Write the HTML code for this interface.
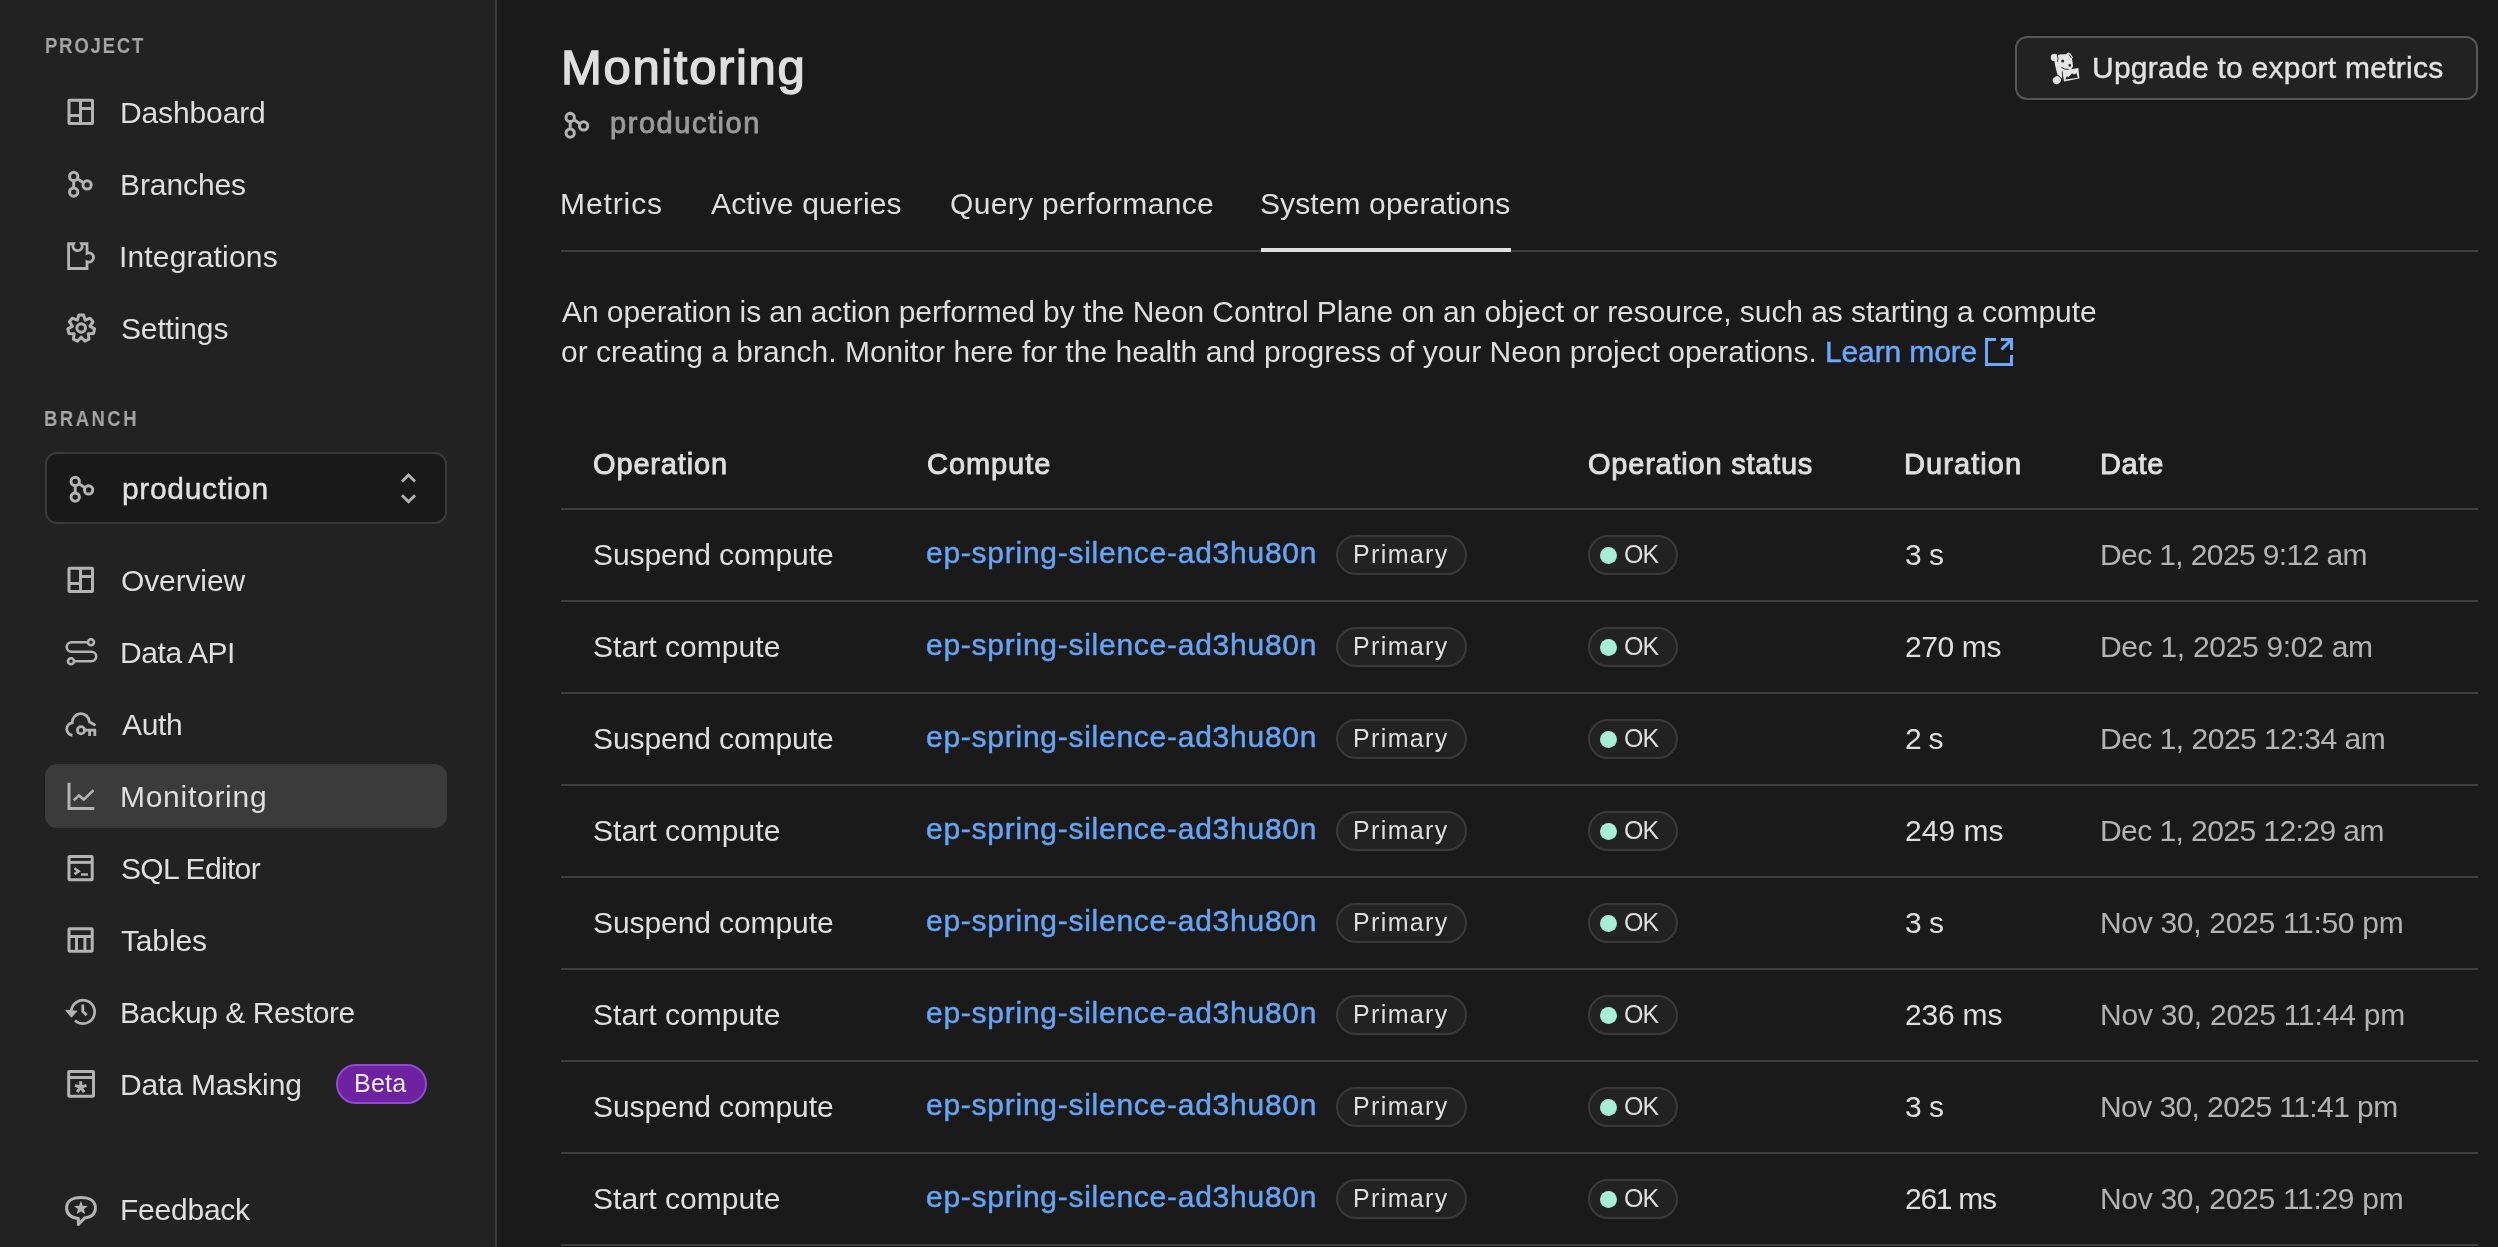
<!DOCTYPE html>
<html><head><meta charset="utf-8">
<style>
*{margin:0;padding:0;box-sizing:border-box}
html,body{width:2498px;height:1247px;overflow:hidden;-webkit-font-smoothing:antialiased;background:#1a1a1a;font-family:"Liberation Sans",sans-serif}
.a{position:absolute;white-space:nowrap;line-height:1;will-change:transform}

#side{position:absolute;left:0;top:0;width:497px;height:1247px;background:#222222;border-right:2px solid #3d3d3d}
.hl{position:absolute;left:45px;top:764px;width:402px;height:64px;background:#3b3b3b;border-radius:12px}
.sel{position:absolute;left:45px;top:452px;width:402px;height:72px;background:#191919;border:2px solid #3a3a3a;border-radius:12px}
.beta{position:absolute;left:336px;top:1064px;width:91px;height:40px;background:#6e22a0;border:2px solid #904ad2;border-radius:20px}
.btn{position:absolute;left:2015px;top:36px;width:463px;height:64px;background:#222;border:2px solid #565656;border-radius:12px}
.hline{position:absolute;height:2px;background:#3d3d3d}
.badge{position:absolute;height:40px;background:#222;border:2px solid #3a3a3a;border-radius:20px}
.dot{position:absolute;width:17px;height:17px;border-radius:50%;background:#a6efd6}
.ov{position:absolute;left:0;top:0}

</style></head><body>

<div id="side"></div>
<div class="hl"></div>
<div class="sel"></div>
<div class="beta"></div>
<div class="btn"></div>
<div class="hline" style="left:561px;top:250px;width:1917px"></div>
<div class="hline" style="left:1261px;top:248px;width:250px;height:4px;background:#e0e0e0"></div>
<div class="hline" style="left:561px;top:508px;width:1917px"></div>
<div class="hline" style="left:561px;top:600px;width:1917px"></div><div class="badge" style="left:1336px;top:535px;width:131px"></div><div class="badge" style="left:1588px;top:535px;width:90px"></div><div class="dot" style="left:1599.5px;top:546.8px"></div><div class="hline" style="left:561px;top:692px;width:1917px"></div><div class="badge" style="left:1336px;top:627px;width:131px"></div><div class="badge" style="left:1588px;top:627px;width:90px"></div><div class="dot" style="left:1599.5px;top:638.8px"></div><div class="hline" style="left:561px;top:784px;width:1917px"></div><div class="badge" style="left:1336px;top:719px;width:131px"></div><div class="badge" style="left:1588px;top:719px;width:90px"></div><div class="dot" style="left:1599.5px;top:730.8px"></div><div class="hline" style="left:561px;top:876px;width:1917px"></div><div class="badge" style="left:1336px;top:811px;width:131px"></div><div class="badge" style="left:1588px;top:811px;width:90px"></div><div class="dot" style="left:1599.5px;top:822.8px"></div><div class="hline" style="left:561px;top:968px;width:1917px"></div><div class="badge" style="left:1336px;top:903px;width:131px"></div><div class="badge" style="left:1588px;top:903px;width:90px"></div><div class="dot" style="left:1599.5px;top:914.8px"></div><div class="hline" style="left:561px;top:1060px;width:1917px"></div><div class="badge" style="left:1336px;top:995px;width:131px"></div><div class="badge" style="left:1588px;top:995px;width:90px"></div><div class="dot" style="left:1599.5px;top:1006.8px"></div><div class="hline" style="left:561px;top:1152px;width:1917px"></div><div class="badge" style="left:1336px;top:1087px;width:131px"></div><div class="badge" style="left:1588px;top:1087px;width:90px"></div><div class="dot" style="left:1599.5px;top:1098.8px"></div><div class="hline" style="left:561px;top:1244px;width:1917px"></div><div class="badge" style="left:1336px;top:1179px;width:131px"></div><div class="badge" style="left:1588px;top:1179px;width:90px"></div><div class="dot" style="left:1599.5px;top:1190.8px"></div>
<svg class="ov" width="2498" height="1247" viewBox="0 0 2498 1247"><g fill="none" stroke="#b3b3b3" stroke-width="3"><rect x="69" y="100.2" width="23.5" height="23.3" rx="0.6"/><path d="M80.5 100.2V123.5M69 115.5H80.5M80.5 108.5H92.5"/><circle cx="73.70" cy="176.40" r="4.15"/><circle cx="73.70" cy="192.10" r="4.15"/><circle cx="87.10" cy="184.90" r="4.15"/><path d="M73.70 180.60L73.70 187.90M77.20 178.60L83.40 182.80"/><path d="M68.6 243.75H73.5A4.65 4.65 0 1 0 81.6 243.75H87V253.26A4.65 4.65 0 1 1 87 261.74V268.5H68.6Z" stroke-linejoin="miter" stroke-width="2.8"/><polygon stroke-linejoin="round" points="78.87,315.00 83.53,315.00 85.10,320.09 90.07,318.15 92.97,321.79 89.97,326.20 94.58,328.87 93.55,333.41 88.24,333.81 89.02,339.08 84.83,341.10 81.20,337.20 77.57,341.10 73.38,339.08 74.16,333.81 68.85,333.41 67.82,328.87 72.43,326.20 69.43,321.79 72.33,318.15 77.30,320.09"/><circle cx="81.2" cy="328" r="4.3"/><circle cx="75.20" cy="481.40" r="4.15"/><circle cx="75.20" cy="497.10" r="4.15"/><circle cx="88.60" cy="489.90" r="4.15"/><path d="M75.20 485.60L75.20 492.90M78.70 483.60L84.90 487.80"/><rect x="69" y="568.2" width="23.5" height="23.3" rx="0.6"/><path d="M80.5 568.2V591.5M69 583.5H80.5M80.5 576.5H92.5"/><circle cx="91" cy="642.3" r="3" stroke-width="2.6"/><circle cx="71" cy="661.2" r="3" stroke-width="2.6"/><path d="M88 642.3H71.5A4.75 4.75 0 0 0 71.5 651.8H91.5A4.7 4.7 0 0 1 91.5 661.2H74" stroke-width="2.6"/><path d="M72.4 735.3A6.3 6.3 0 0 1 72.2 722.8A8.6 8.6 0 0 1 89.4 721.8L95.5 725.4" stroke-width="2.8"/><circle cx="81" cy="730.2" r="3.6" stroke-width="2.8"/><path d="M84.6 730.2H96.2M89.6 730.2V736M94.8 730.2V736" stroke-width="2.8"/><path d="M69 782.8V808.5H94.3" stroke-width="3"/><path d="M73.7 800.4L79 795.4L83.8 799.6L93.5 790.3" stroke-width="2.6"/><rect x="69" y="856.6" width="23.2" height="23.2" rx="0.6"/><path d="M69 862.4H92.2"/><path d="M74.5 868.3L78.6 871.2L74.5 874.1" stroke-width="2.6"/><path d="M80.9 874.5H88" stroke-width="2.4"/><rect x="69" y="928.7" width="23.2" height="22.5" rx="0.6"/><path d="M69 936.4H92.2M76.5 936.4V951.2M84.9 936.4V951.2"/><path d="M71.3 1010.6A11.7 11.7 0 1 1 75 1020.5" stroke-width="2.7"/><path d="M82.8 1004.6V1011.5L86.6 1015.2" stroke-width="2.8"/><polygon points="65.8,1010.2 77,1011.2 71.4,1017.2" fill="#b3b3b3" stroke="#b3b3b3" stroke-width="1" stroke-linejoin="round"/><rect x="68.7" y="1071.4" width="24.8" height="24.8" rx="0.6"/><path d="M68.7 1077.5H93.5"/><path d="M80.70 1087.20L80.70 1081.20M80.70 1087.20L86.41 1085.35M80.70 1087.20L84.23 1092.05M80.70 1087.20L77.17 1092.05M80.70 1087.20L74.99 1085.35" stroke-width="3"/><path d="M78.3 1218.6C70.5 1217.5 66.6 1213.5 66.6 1208C66.6 1201.5 72 1197.4 81 1197.4C90 1197.4 95.4 1201.5 95.4 1208C95.4 1213.5 91.4 1217.2 84.5 1218.1L78.4 1224.5Z" stroke-width="3" stroke-linejoin="round"/><polygon points="80.90,1201.10 82.72,1205.79 87.75,1206.08 83.85,1209.26 85.13,1214.12 80.90,1211.40 76.67,1214.12 77.95,1209.26 74.05,1206.08 79.08,1205.79" fill="#b3b3b3" stroke="none"/><path d="M402 481.5L408.5 475L415 481.5M402 495.2L408.5 501.7L415 495.2" stroke-width="2.8"/><circle cx="570.20" cy="117.40" r="4.15"/><circle cx="570.20" cy="133.10" r="4.15"/><circle cx="583.60" cy="125.90" r="4.15"/><path d="M570.20 121.60L570.20 128.90M573.70 119.60L579.90 123.80"/></g><g fill="none" stroke="#6aa9ff" stroke-width="3"><path d="M1996 339.5H1986.5V364.5H2011.5V355"/><path d="M2001 339.5H2011.5V350M2011.5 339.5L2001.5 349.5"/></g><g fill="#e6e6e6" stroke="none"><polygon points="2056.5,56.5 2059,54.5 2066,54.2 2068,52.5 2070.5,53.5 2073,57.5 2072,58.5 2072.5,62 2073,66.5 2071,69.5 2067,70.3 2063,70.8 2062.5,74 2062.5,78.5 2060,78 2057.5,75 2056.5,71 2055.5,67 2054.5,62"/><circle cx="2054.5" cy="57.5" r="3.7"/><ellipse cx="2056.8" cy="80.2" rx="4.2" ry="3.8" transform="rotate(-30 2056.8 80.2)"/><polygon points="2062,70.5 2078.4,67.9 2079.4,78.5 2064,81.4"/></g><g fill="#222222" stroke="none"><polygon points="2065.2,79.6 2066.8,76.2 2068.5,77 2072,73.3 2074,74.5 2076.5,73.2 2077.9,77.8"/><circle cx="2062.7" cy="61.1" r="1.5"/><circle cx="2069.8" cy="65.4" r="1.3"/></g><g fill="none" stroke="#222222" stroke-width="0.9"><path d="M2061.4 67.6Q2065 69.8 2068.6 69.3M2069.2 54.6L2071.2 57.8M2062.2 71.3L2062.8 78.6M2057.9 75.3L2060.8 77.8M2057.2 54.8Q2058.6 58.2 2057.6 61.8"/></g></svg>

<div class="a" id="lp" style="left:45.00px;top:35px;font-size:22px;font-weight:bold;color:#a6a6a6;letter-spacing:2.164px;transform:scaleX(0.84);transform-origin:0 0;">PROJECT</div>
<div class="a" id="n0" style="left:120.00px;top:98px;font-size:30px;font-weight:normal;color:#dfdfdf;letter-spacing:-0.125px;">Dashboard</div>
<div class="a" id="n1" style="left:120.00px;top:170px;font-size:30px;font-weight:normal;color:#dfdfdf;letter-spacing:-0.094px;">Branches</div>
<div class="a" id="n2" style="left:119.00px;top:242px;font-size:30px;font-weight:normal;color:#dfdfdf;letter-spacing:0.172px;">Integrations</div>
<div class="a" id="n3" style="left:121.00px;top:314px;font-size:30px;font-weight:normal;color:#dfdfdf;letter-spacing:-0.143px;">Settings</div>
<div class="a" id="lb" style="left:44.00px;top:408px;font-size:22px;font-weight:bold;color:#a6a6a6;letter-spacing:2.956px;transform:scaleX(0.84);transform-origin:0 0;">BRANCH</div>
<div class="a" id="selp" style="left:122.00px;top:474px;font-size:30px;font-weight:normal;color:#e2e2e2;letter-spacing:0.667px;-webkit-text-stroke:0.4px #e2e2e2">production</div>
<div class="a" id="b0" style="left:121.00px;top:566px;font-size:30px;font-weight:normal;color:#dfdfdf;letter-spacing:-0.131px;">Overview</div>
<div class="a" id="b1" style="left:120.00px;top:638px;font-size:30px;font-weight:normal;color:#dfdfdf;letter-spacing:-0.429px;">Data API</div>
<div class="a" id="b2" style="left:122.00px;top:710px;font-size:30px;font-weight:normal;color:#dfdfdf;letter-spacing:-0.364px;">Auth</div>
<div class="a" id="b3" style="left:120.00px;top:782px;font-size:30px;font-weight:normal;color:#dfdfdf;letter-spacing:0.722px;">Monitoring</div>
<div class="a" id="b4" style="left:121.00px;top:854px;font-size:30px;font-weight:normal;color:#dfdfdf;letter-spacing:-0.667px;">SQL Editor</div>
<div class="a" id="b5" style="left:121.00px;top:926px;font-size:30px;font-weight:normal;color:#dfdfdf;letter-spacing:-0.160px;">Tables</div>
<div class="a" id="b6" style="left:120.00px;top:998px;font-size:30px;font-weight:normal;color:#dfdfdf;letter-spacing:-0.435px;">Backup &amp; Restore</div>
<div class="a" id="b7" style="left:120.00px;top:1070px;font-size:30px;font-weight:normal;color:#dfdfdf;letter-spacing:-0.141px;">Data Masking</div>
<div class="a" id="fb" style="left:120.00px;top:1195px;font-size:30px;font-weight:normal;color:#dfdfdf;letter-spacing:-0.237px;">Feedback</div>
<div class="a" id="beta" style="left:354.30px;top:1071px;font-size:25px;font-weight:normal;color:#ececec;letter-spacing:0.264px;">Beta</div>
<div class="a" id="title" style="left:560.50px;top:43px;font-size:49px;font-weight:normal;color:#dfdfdf;letter-spacing:1.666px;-webkit-text-stroke:1.4px #dfdfdf">Monitoring</div>
<div class="a" id="sub" style="left:609.50px;top:109px;font-size:29px;font-weight:normal;color:#9a9a9a;letter-spacing:1.556px;-webkit-text-stroke:0.9px #9a9a9a">production</div>
<div class="a" id="upg" style="left:2092.00px;top:53px;font-size:30px;font-weight:normal;color:#e2e2e2;letter-spacing:0.250px;-webkit-text-stroke:0.4px #e2e2e2">Upgrade to export metrics</div>
<div class="a" id="tab0" style="left:560.00px;top:189px;font-size:30px;font-weight:normal;color:#dfdfdf;letter-spacing:0.904px;">Metrics</div>
<div class="a" id="tab1" style="left:711.00px;top:189px;font-size:30px;font-weight:normal;color:#dfdfdf;letter-spacing:0.164px;">Active queries</div>
<div class="a" id="tab2" style="left:950.40px;top:189px;font-size:30px;font-weight:normal;color:#dfdfdf;letter-spacing:0.327px;">Query performance</div>
<div class="a" id="tab3" style="left:1260.00px;top:189px;font-size:30px;font-weight:normal;color:#dfdfdf;letter-spacing:0.108px;">System operations</div>
<div class="a" id="p1" style="left:562.00px;top:297px;font-size:30px;font-weight:normal;color:#dfdfdf;letter-spacing:-0.070px;">An operation is an action performed by the Neon Control Plane on an object or resource, such as starting a compute</div>
<div class="a" id="p2" style="left:561.00px;top:337px;font-size:30px;font-weight:normal;color:#dfdfdf;letter-spacing:0.019px;">or creating a branch. Monitor here for the health and progress of your Neon project operations.</div>
<div class="a" id="lm" style="left:1824.80px;top:337px;font-size:30px;font-weight:normal;color:#6aa9ff;letter-spacing:-0.129px;-webkit-text-stroke:0.4px #6aa9ff">Learn more</div>
<div class="a" id="th0" style="left:593.00px;top:450px;font-size:29px;font-weight:normal;color:#dfdfdf;letter-spacing:0.850px;-webkit-text-stroke:0.9px #dfdfdf">Operation</div>
<div class="a" id="th1" style="left:926.50px;top:450px;font-size:29px;font-weight:normal;color:#dfdfdf;letter-spacing:0.934px;-webkit-text-stroke:0.9px #dfdfdf">Compute</div>
<div class="a" id="th2" style="left:1587.80px;top:450px;font-size:29px;font-weight:normal;color:#dfdfdf;letter-spacing:0.772px;-webkit-text-stroke:0.9px #dfdfdf">Operation status</div>
<div class="a" id="th3" style="left:1903.70px;top:450px;font-size:29px;font-weight:normal;color:#dfdfdf;letter-spacing:1.085px;-webkit-text-stroke:0.9px #dfdfdf">Duration</div>
<div class="a" id="th4" style="left:2100.00px;top:450px;font-size:29px;font-weight:normal;color:#dfdfdf;letter-spacing:0.667px;-webkit-text-stroke:0.9px #dfdfdf">Date</div>
<div class="a" id="op0" style="left:593.20px;top:540px;font-size:30px;font-weight:normal;color:#dfdfdf;letter-spacing:-0.085px;">Suspend compute</div>
<div class="a" id="ln0" style="left:926.00px;top:538px;font-size:30px;font-weight:normal;color:#66a6f8;letter-spacing:0.740px;-webkit-text-stroke:0.4px #66a6f8">ep-spring-silence-ad3hu80n</div>
<div class="a" id="pr0" style="left:1353.10px;top:542px;font-size:25px;font-weight:normal;color:#dfdfdf;letter-spacing:1.364px;">Primary</div>
<div class="a" id="ok0" style="left:1624.00px;top:542px;font-size:25px;font-weight:normal;color:#dfdfdf;letter-spacing:-1.000px;">OK</div>
<div class="a" id="du0" style="left:1905.20px;top:540px;font-size:30px;font-weight:normal;color:#dfdfdf;letter-spacing:-0.450px;">3 s</div>
<div class="a" id="dt0" style="left:2100.00px;top:540px;font-size:30px;font-weight:normal;color:#b3b3b3;letter-spacing:-0.610px;">Dec 1, 2025 9:12 am</div>
<div class="a" id="op1" style="left:593.20px;top:632px;font-size:30px;font-weight:normal;color:#dfdfdf;letter-spacing:0.054px;">Start compute</div>
<div class="a" id="ln1" style="left:926.00px;top:630px;font-size:30px;font-weight:normal;color:#66a6f8;letter-spacing:0.740px;-webkit-text-stroke:0.4px #66a6f8">ep-spring-silence-ad3hu80n</div>
<div class="a" id="pr1" style="left:1353.10px;top:634px;font-size:25px;font-weight:normal;color:#dfdfdf;letter-spacing:1.364px;">Primary</div>
<div class="a" id="ok1" style="left:1624.00px;top:634px;font-size:25px;font-weight:normal;color:#dfdfdf;letter-spacing:-1.000px;">OK</div>
<div class="a" id="du1" style="left:1905.20px;top:632px;font-size:30px;font-weight:normal;color:#dfdfdf;letter-spacing:-0.400px;">270 ms</div>
<div class="a" id="dt1" style="left:2100.00px;top:632px;font-size:30px;font-weight:normal;color:#b3b3b3;letter-spacing:-0.306px;">Dec 1, 2025 9:02 am</div>
<div class="a" id="op2" style="left:593.20px;top:724px;font-size:30px;font-weight:normal;color:#dfdfdf;letter-spacing:-0.085px;">Suspend compute</div>
<div class="a" id="ln2" style="left:926.00px;top:722px;font-size:30px;font-weight:normal;color:#66a6f8;letter-spacing:0.740px;-webkit-text-stroke:0.4px #66a6f8">ep-spring-silence-ad3hu80n</div>
<div class="a" id="pr2" style="left:1353.10px;top:726px;font-size:25px;font-weight:normal;color:#dfdfdf;letter-spacing:1.364px;">Primary</div>
<div class="a" id="ok2" style="left:1624.00px;top:726px;font-size:25px;font-weight:normal;color:#dfdfdf;letter-spacing:-1.000px;">OK</div>
<div class="a" id="du2" style="left:1905.20px;top:724px;font-size:30px;font-weight:normal;color:#dfdfdf;letter-spacing:-0.700px;">2 s</div>
<div class="a" id="dt2" style="left:2100.00px;top:724px;font-size:30px;font-weight:normal;color:#b3b3b3;letter-spacing:-0.500px;">Dec 1, 2025 12:34 am</div>
<div class="a" id="op3" style="left:593.20px;top:816px;font-size:30px;font-weight:normal;color:#dfdfdf;letter-spacing:0.054px;">Start compute</div>
<div class="a" id="ln3" style="left:926.00px;top:814px;font-size:30px;font-weight:normal;color:#66a6f8;letter-spacing:0.740px;-webkit-text-stroke:0.4px #66a6f8">ep-spring-silence-ad3hu80n</div>
<div class="a" id="pr3" style="left:1353.10px;top:818px;font-size:25px;font-weight:normal;color:#dfdfdf;letter-spacing:1.364px;">Primary</div>
<div class="a" id="ok3" style="left:1624.00px;top:818px;font-size:25px;font-weight:normal;color:#dfdfdf;letter-spacing:-1.000px;">OK</div>
<div class="a" id="du3" style="left:1905.20px;top:816px;font-size:30px;font-weight:normal;color:#dfdfdf;letter-spacing:0.020px;">249 ms</div>
<div class="a" id="dt3" style="left:2100.00px;top:816px;font-size:30px;font-weight:normal;color:#b3b3b3;letter-spacing:-0.567px;">Dec 1, 2025 12:29 am</div>
<div class="a" id="op4" style="left:593.20px;top:908px;font-size:30px;font-weight:normal;color:#dfdfdf;letter-spacing:-0.085px;">Suspend compute</div>
<div class="a" id="ln4" style="left:926.00px;top:906px;font-size:30px;font-weight:normal;color:#66a6f8;letter-spacing:0.740px;-webkit-text-stroke:0.4px #66a6f8">ep-spring-silence-ad3hu80n</div>
<div class="a" id="pr4" style="left:1353.10px;top:910px;font-size:25px;font-weight:normal;color:#dfdfdf;letter-spacing:1.364px;">Primary</div>
<div class="a" id="ok4" style="left:1624.00px;top:910px;font-size:25px;font-weight:normal;color:#dfdfdf;letter-spacing:-1.000px;">OK</div>
<div class="a" id="du4" style="left:1905.20px;top:908px;font-size:30px;font-weight:normal;color:#dfdfdf;letter-spacing:-0.450px;">3 s</div>
<div class="a" id="dt4" style="left:2100.00px;top:908px;font-size:30px;font-weight:normal;color:#b3b3b3;letter-spacing:-0.300px;">Nov 30, 2025 11:50 pm</div>
<div class="a" id="op5" style="left:593.20px;top:1000px;font-size:30px;font-weight:normal;color:#dfdfdf;letter-spacing:0.054px;">Start compute</div>
<div class="a" id="ln5" style="left:926.00px;top:998px;font-size:30px;font-weight:normal;color:#66a6f8;letter-spacing:0.740px;-webkit-text-stroke:0.4px #66a6f8">ep-spring-silence-ad3hu80n</div>
<div class="a" id="pr5" style="left:1353.10px;top:1002px;font-size:25px;font-weight:normal;color:#dfdfdf;letter-spacing:1.364px;">Primary</div>
<div class="a" id="ok5" style="left:1624.00px;top:1002px;font-size:25px;font-weight:normal;color:#dfdfdf;letter-spacing:-1.000px;">OK</div>
<div class="a" id="du5" style="left:1905.20px;top:1000px;font-size:30px;font-weight:normal;color:#dfdfdf;letter-spacing:-0.200px;">236 ms</div>
<div class="a" id="dt5" style="left:2100.00px;top:1000px;font-size:30px;font-weight:normal;color:#b3b3b3;letter-spacing:-0.225px;">Nov 30, 2025 11:44 pm</div>
<div class="a" id="op6" style="left:593.20px;top:1092px;font-size:30px;font-weight:normal;color:#dfdfdf;letter-spacing:-0.085px;">Suspend compute</div>
<div class="a" id="ln6" style="left:926.00px;top:1090px;font-size:30px;font-weight:normal;color:#66a6f8;letter-spacing:0.740px;-webkit-text-stroke:0.4px #66a6f8">ep-spring-silence-ad3hu80n</div>
<div class="a" id="pr6" style="left:1353.10px;top:1094px;font-size:25px;font-weight:normal;color:#dfdfdf;letter-spacing:1.364px;">Primary</div>
<div class="a" id="ok6" style="left:1624.00px;top:1094px;font-size:25px;font-weight:normal;color:#dfdfdf;letter-spacing:-1.000px;">OK</div>
<div class="a" id="du6" style="left:1905.20px;top:1092px;font-size:30px;font-weight:normal;color:#dfdfdf;letter-spacing:-0.450px;">3 s</div>
<div class="a" id="dt6" style="left:2100.00px;top:1092px;font-size:30px;font-weight:normal;color:#b3b3b3;letter-spacing:-0.575px;">Nov 30, 2025 11:41 pm</div>
<div class="a" id="op7" style="left:593.20px;top:1184px;font-size:30px;font-weight:normal;color:#dfdfdf;letter-spacing:0.054px;">Start compute</div>
<div class="a" id="ln7" style="left:926.00px;top:1182px;font-size:30px;font-weight:normal;color:#66a6f8;letter-spacing:0.740px;-webkit-text-stroke:0.4px #66a6f8">ep-spring-silence-ad3hu80n</div>
<div class="a" id="pr7" style="left:1353.10px;top:1186px;font-size:25px;font-weight:normal;color:#dfdfdf;letter-spacing:1.364px;">Primary</div>
<div class="a" id="ok7" style="left:1624.00px;top:1186px;font-size:25px;font-weight:normal;color:#dfdfdf;letter-spacing:-1.000px;">OK</div>
<div class="a" id="du7" style="left:1905.20px;top:1184px;font-size:30px;font-weight:normal;color:#dfdfdf;letter-spacing:-1.300px;">261 ms</div>
<div class="a" id="dt7" style="left:2100.00px;top:1184px;font-size:30px;font-weight:normal;color:#b3b3b3;letter-spacing:-0.300px;">Nov 30, 2025 11:29 pm</div>
</body></html>
